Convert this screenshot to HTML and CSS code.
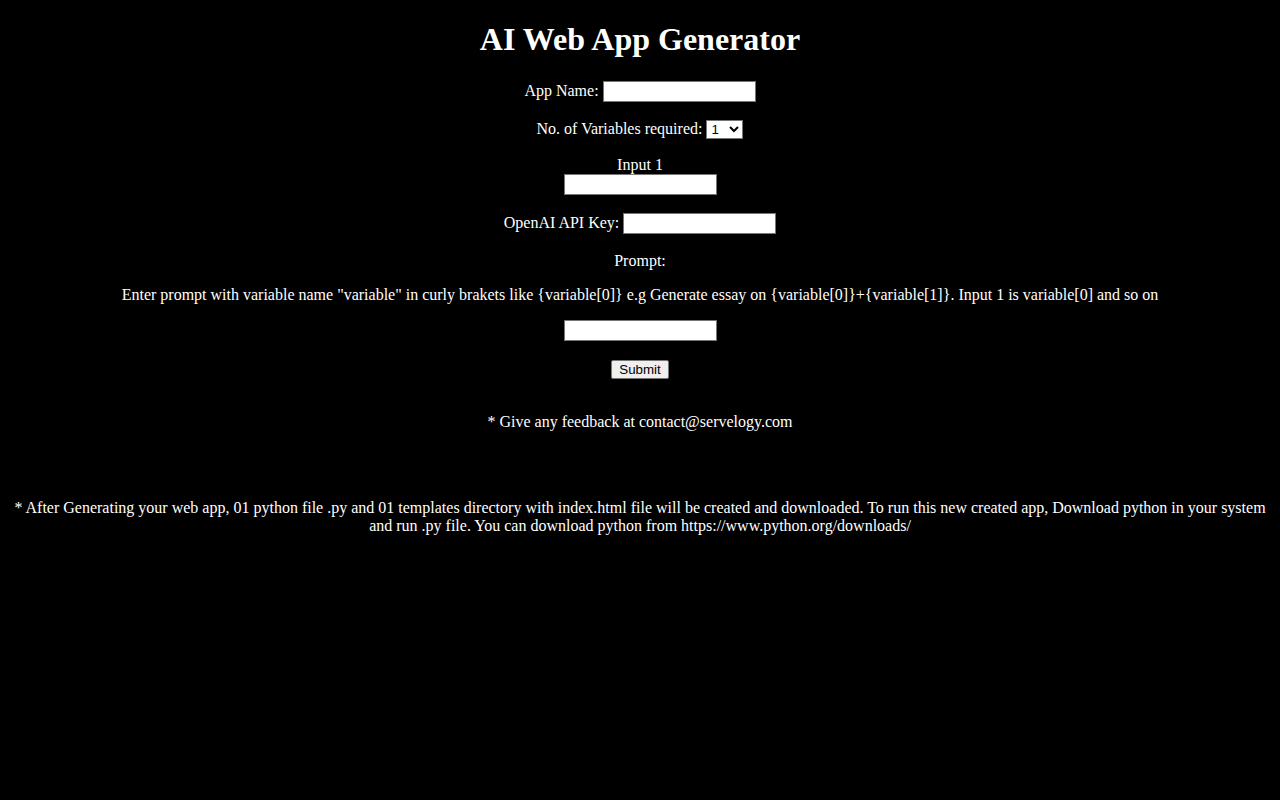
FILE: index.html
```html
<!DOCTYPE html>
<html lang="en">
<head>
<meta charset="utf-8">
<title>AI Web App Generator</title>
<link rel="stylesheet" href="styles.css">
</head>
<body class="page">
  <h1 class="title">AI Web App Generator</h1>
  <form class="gen-form">
    <p class="row"><label>App Name: </label><input class="field" type="text"></p>
    <p class="row"><label>No. of Variables required: </label><select class="picker"><option>1</option><option>2</option><option>3</option></select></p>
    <p class="row">Input 1<br><input class="field" type="text"></p>
    <p class="row"><label>OpenAI API Key: </label><input class="field" type="password"></p>
    <p class="row">Prompt:</p>
    <p class="row">Enter prompt with variable name "variable" in curly brakets like {variable[0]} e.g Generate essay on {variable[0]}+{variable[1]}. Input 1 is variable[0] and so on</p>
    <p class="row"><input class="field" type="text"></p>
    <p class="row"><button class="btn" type="button">Submit</button></p>
  </form>
  <p class="note feedback">* Give any feedback at contact@servelogy.com</p>
  <p class="note info">* After Generating your web app, 01 python file .py and 01 templates directory with index.html file will be created and downloaded. To run this new created app, Download python in your system and run .py file. You can download python from https://www.python.org/downloads/</p>
</body>
</html>
```

FILE: styles.css
```css
html { background: #000; }
.page {
  margin: 0 8px 8px;
  padding-top: 21px;
  background: #000;
  color: #fff;
  font-family: "Liberation Serif", "Times New Roman", serif;
  font-size: 16px;
  text-align: center;
}
.title {
  font-size: 32px;
  font-weight: bold;
  margin: 0 0 23.44px;
}
.gen-form { margin: 0; }
.row { margin: 16px 0; }
.field {
  font-family: "Liberation Sans", Arial, sans-serif;
  font-size: 13.333px;
  width: 153px;
  height: 21px;
  box-sizing: border-box;
  padding: 1px 2px;
  margin: 0 0 2px;
  border: 1px solid #767676;
  border-radius: 0;
  background: #fff;
  color: #000;
  vertical-align: baseline;
}
.picker {
  font-family: "Liberation Sans", Arial, sans-serif;
  font-size: 13.333px;
  height: 19px;
  width: 37px;
  margin: 0 0 1px;
  border: 1px solid #767676;
  border-radius: 0;
  background: #fff;
  color: #000;
}
.btn {
  font-family: "Liberation Sans", Arial, sans-serif;
  font-size: 13.333px;
  padding: 1px 7px;
  margin: 1px 0 0;
  border: 1px solid #767676;
  border-radius: 2px;
  background: #efefef;
  color: #000;
}
.feedback { margin: 34px 0 0; }
.info { margin: 68px 0 16px; }
```
